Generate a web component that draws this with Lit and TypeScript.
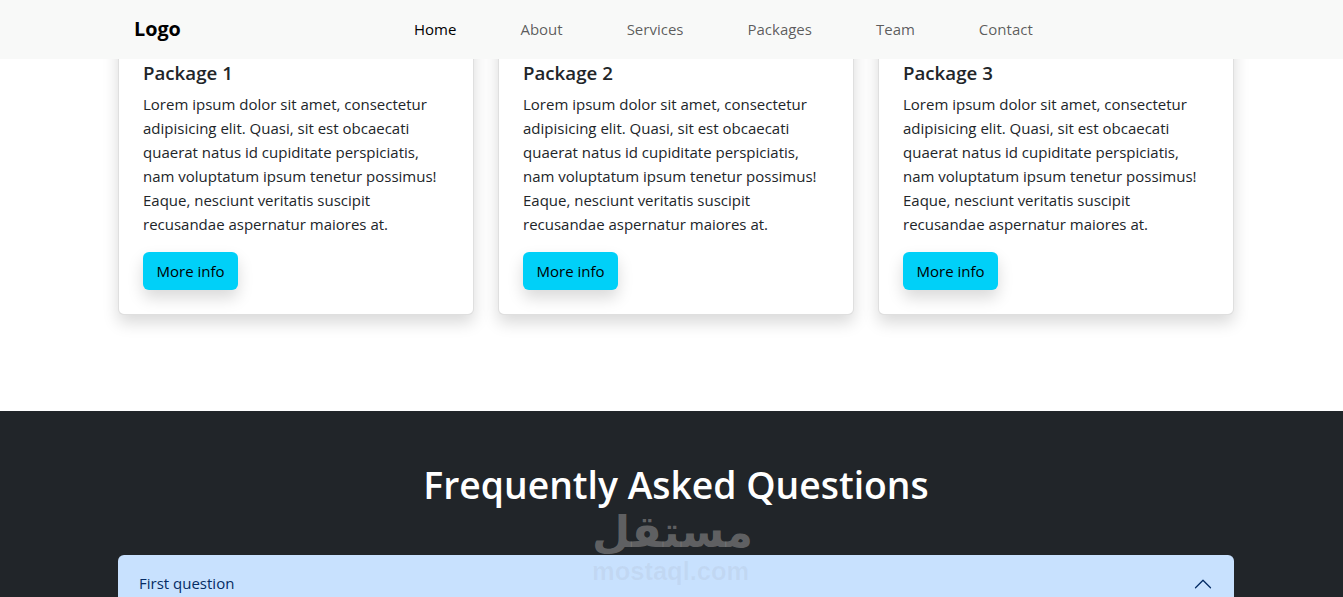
import { LitElement, html, css } from "lit";
import { customElement } from "lit/decorators.js";

const LINKS = ["Home", "About", "Services", "Packages", "Team", "Contact"];
const LOREM = [
  "Lorem ipsum dolor sit amet, consectetur",
  "adipisicing elit. Quasi, sit est obcaecati",
  "quaerat natus id cupiditate perspiciatis,",
  "nam voluptatum ipsum tenetur possimus!",
  "Eaque, nesciunt veritatis suscipit",
  "recusandae aspernatur maiores at.",
];

@customElement("app-root")
export class AppRoot extends LitElement {
  static styles = css`
    :host {
      display: block;
      position: relative;
      height: 597px;
      overflow: hidden;
      font-family: "Open Sans", "Noto Sans", sans-serif;
      font-size: 15px;
      line-height: 24px;
      color: #212529;
      background: #fff;
    }

    /* navbar sits over the scrolled page */
    .navbar {
      position: absolute;
      top: 0;
      left: 0;
      right: 0;
      height: 57px;
      padding-bottom: 2px;
      display: flex;
      align-items: center;
      padding-left: 134px;
      background: #f8f9f8;
      z-index: 2;
    }
    .brand {
      width: 280px;
      font-size: 19.8px;
      font-weight: 700;
      color: #000;
    }
    .nav {
      display: flex;
      gap: 64px;
      color: rgba(0, 0, 0, 0.65);
    }
    .nav .active {
      color: #000;
    }

    /* page content, offset as if scrolled down */
    .packages {
      display: grid;
      grid-template-columns: repeat(3, 356px);
      gap: 24px;
      margin-top: -40px;
      padding: 0 0 96px 118px;
    }
    .card {
      padding: 16px 24px 24px;
      background: #fff;
      border: 1px solid rgba(0, 0, 0, 0.125);
      border-radius: 6px;
      box-shadow: 0 8px 16px rgba(0, 0, 0, 0.15);
      height: 355px;
      box-sizing: border-box;
      display: flex;
      flex-direction: column;
      justify-content: flex-end;
    }
    .card h5 {
      margin: 0 0 7px;
      font-size: 18.7px;
      line-height: 24px;
      font-weight: 600;
    }
    .card p {
      margin: 0 0 16px;
    }
    .card p span {
      display: block;
      white-space: nowrap;
    }
    .btn {
      align-self: flex-start;
      width: 95px;
      height: 38px;
      padding: 0;
      border: 0;
      border-radius: 6px;
      background: #00d0f8;
      color: #000;
      font: inherit;
      box-shadow: 0 8px 16px rgba(0, 0, 0, 0.15);
    }

    .faq {
      height: 186px;
      box-sizing: border-box;
      padding: 46px 109px 0 118px;
      background: #212529;
    }
    .faq h2 {
      margin: 0 0 42px;
      height: 56px;
      font-size: 37.3px;
      line-height: 56px;
      font-weight: 600;
      text-align: center;
      color: #fff;
    }
    .accordion-button {
      display: flex;
      justify-content: space-between;
      align-items: center;
      height: 58px;
      padding: 0 21px;
      border-radius: 6px 6px 0 0;
      background: #c8e1fe;
      color: #052c65;
    }
    .accordion-button span {
      margin-top: -2px;
    }
    .accordion-button svg {
      display: block;
    }

    .watermark {
      position: absolute;
      left: 592px;
      top: 506px;
      width: 157px;
      text-align: center;
      z-index: 3;
      pointer-events: none;
    }
    .watermark .ar {
      display: block;
      height: 53px;
      font-family: "DejaVu Sans", sans-serif;
      font-size: 44px;
      font-weight: 700;
      line-height: 52px;
      color: rgba(128, 128, 128, 0.68);
    }
    .watermark .en {
      display: block;
      font-family: "Liberation Sans", sans-serif;
      font-size: 25.5px;
      font-weight: 700;
      line-height: 24px;
      color: rgba(128, 128, 128, 0.09);
    }
  `;

  render() {
    return html`
      <nav class="navbar">
        <div class="brand">Logo</div>
        <div class="nav">
          ${LINKS.map((l, i) => html`<span class=${i === 0 ? "active" : ""}>${l}</span>`)}
        </div>
      </nav>
      <section class="packages">
        ${[1, 2, 3].map(
          (n) => html`
            <div class="card">
              <h5>Package ${n}</h5>
              <p>${LOREM.map((l) => html`<span>${l}</span>`)}</p>
              <button class="btn">More info</button>
            </div>
          `
        )}
      </section>
      <section class="faq">
        <h2>Frequently Asked Questions</h2>
        <div class="accordion-button">
          <span>First question</span>
          <svg width="20" height="20" viewBox="0 0 16 16" fill="#052c65">
            <path
              fill-rule="evenodd"
              d="M14.354 11.354a.5.5 0 0 1-.708 0L8 5.707l-5.646 5.647a.5.5 0 0 1-.708-.708l6-6a.5.5 0 0 1 .708 0l6 6a.5.5 0 0 1 0 .708z"
            ></path>
          </svg>
        </div>
      </section>
      <div class="watermark">
        <span class="ar">مستقل</span>
        <span class="en">mostaql.com</span>
      </div>
    `;
  }
}
